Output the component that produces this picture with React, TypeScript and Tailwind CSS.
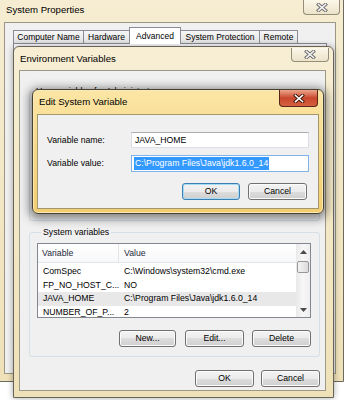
const rows = [
  ["ComSpec", "C:\\Windows\\system32\\cmd.exe"],
  ["FP_NO_HOST_C...", "NO"],
  ["JAVA_HOME", "C:\\Program Files\\Java\\jdk1.6.0_14"],
  ["NUMBER_OF_P...", "2"],
];

function CloseGlyph({ active = false }: { active?: boolean }) {
  return (
    <svg width="12" height="9" viewBox="0 0 12 9">
      <path
        d="M2.5 1.5 L9.5 7.5 M9.5 1.5 L2.5 7.5"
        stroke={active ? "#3f160c" : "#6a6a6a"}
        strokeWidth="3.4"
        strokeLinecap="square"
      />
      <path
        d="M2.5 1.5 L9.5 7.5 M9.5 1.5 L2.5 7.5"
        stroke={active ? "#ffffff" : "#f4f4f4"}
        strokeWidth="1.6"
        strokeLinecap="square"
      />
    </svg>
  );
}

function CloseButton({ active = false, className = "" }: { active?: boolean; className?: string }) {
  return (
    <div
      className={`absolute flex items-center justify-center rounded-b-[4px] border border-t-0 ${
        active
          ? "border-[#5a2416] bg-linear-to-b from-[#eca48d] via-[#c8472c] to-[#d5603f]"
          : "border-[#938d7a] bg-linear-to-b from-[#fbf7ea] to-[#ece3c8]"
      } ${className}`}
    >
      <CloseGlyph active={active} />
    </div>
  );
}

function WinButton({
  label,
  className = "",
  focused = false,
}: {
  label: string;
  className?: string;
  focused?: boolean;
}) {
  return (
    <div
      className={`h-[17px] flex items-center justify-center rounded-[3px] border text-[8.7px] leading-none text-black bg-[linear-gradient(#f3f3f3_0%,#ebebeb_50%,#dddddd_50%,#cfcfcf_100%)] ${
        focused
          ? "border-[#3c7fb1] shadow-[inset_0_0_0_1px_#a6dbf5]"
          : "border-[#707070] shadow-[inset_0_0_0_1px_#fbfbfb]"
      } ${className}`}
    >
      {label}
    </div>
  );
}

function Tab({ label, width, selected = false }: { label: string; width: string; selected?: boolean }) {
  return (
    <div
      className={`${width} ${
        selected ? "relative z-10 h-[17px] bg-white" : "h-[14px] bg-linear-to-b from-[#f6f6f6] to-[#e0e0e0]"
      } -ml-px first:ml-0 border border-b-0 border-[#898c95] flex items-center justify-center text-[8.5px] leading-none text-black`}
    >
      {label}
    </div>
  );
}

function Arrow({ up = false }: { up?: boolean }) {
  return (
    <svg width="7" height="4" viewBox="0 0 7 4">
      <path d={up ? "M3.5 0 L7 4 L0 4 Z" : "M0 0 L7 0 L3.5 4 Z"} fill="#4a4a4a" />
    </svg>
  );
}

export default function App() {
  return (
    <div className="relative w-[344px] h-[400px] overflow-hidden bg-white font-['Liberation_Sans',Arial,sans-serif] text-black">
      {/* System Properties */}
      <div className="absolute left-[-4px] top-[-6px] w-[348px] h-[388px] flex flex-col rounded-t-[7px] border border-[#6c6a5f] bg-linear-to-b from-[#f6edd2] to-[#efe1b8]">
        <div className="h-[27px] flex items-end pb-[6px] pl-[9px] text-[9.6px] leading-[12px]">System Properties</div>
        <CloseButton className="right-[3px] top-[5px] w-[37px] h-[15px]" />
        <div className="flex-1 mx-[7px] mb-[7px] flex flex-col bg-[#f0f0f0] border border-[#9a9585]">
          <div className="flex items-end pt-[4px] pl-[8px]">
            <Tab label="Computer Name" width="w-[71px]" />
            <Tab label="Hardware" width="w-[47px]" />
            <Tab label="Advanced" width="w-[52px]" selected />
            <Tab label="System Protection" width="w-[80px]" />
            <Tab label="Remote" width="w-[39px]" />
          </div>
          <div className="flex-1 mx-[8px] mb-[8px] -mt-px border border-[#898c95] bg-white" />
        </div>
      </div>

      {/* Environment Variables */}
      <div className="absolute left-[13px] top-[46px] w-[321px] h-[352px] flex flex-col rounded-t-[6px] border border-[#67645a] bg-linear-to-b from-[#f7eed4] to-[#efe1b7] shadow-[0_0_6px_rgba(0,0,0,0.35)]">
        <div className="h-[23px] flex items-center pl-[6px] text-[9.6px] leading-[12px]">Environment Variables</div>
        <CloseButton className="right-[4px] top-[1px] w-[38px] h-[14px]" />
        <div className="flex-1 ml-[5px] mr-[7px] mb-[6px] flex flex-col pl-[9px] pr-[5px] pt-[14px] bg-[#f0f0f0] border border-[#9c9888]">
          <fieldset className="h-[136px] border border-[#d5dfe5] rounded-[3px]">
            <legend className="ml-[4px] px-[2px] text-[8.7px] leading-[12px]">User variables for Administrator</legend>
          </fieldset>

          <fieldset className="mt-[5px] pl-[7px] pr-[8px] pb-[9px] border border-[#d5dfe5] rounded-[3px]">
            <legend className="ml-[4px] px-[2px] text-[8.7px] leading-[12px]">System variables</legend>
            <div className="mt-[5px] h-[75px] flex border border-[#828790] bg-white overflow-hidden">
              <div className="flex-1 flex flex-col text-[8.7px] leading-none">
                <div className="h-[19px] flex shrink-0 border-b border-[#e5e5e5] bg-linear-to-b from-white to-[#f7f8f9] text-[#1e2a3a]">
                  <div className="w-[81px] flex items-center pl-[4px] border-r border-[#e5e5e5]">Variable</div>
                  <div className="flex items-center pl-[5px]">Value</div>
                </div>
                <div className="pt-[2px] flex flex-col">
                  {rows.map(([name, value]) => (
                    <div
                      key={name}
                      className={`h-[13.5px] shrink-0 flex items-center ${name === "JAVA_HOME" ? "bg-[#e8e8e8]" : ""}`}
                    >
                      <div className="w-[81px] pl-[5px] whitespace-nowrap">{name}</div>
                      <div className="pl-[5px] whitespace-nowrap">{value}</div>
                    </div>
                  ))}
                </div>
              </div>
              <div className="w-[14px] flex flex-col bg-linear-to-r from-[#e9e9e9] via-[#f7f7f7] to-[#eeeeee]">
                <div className="h-[15px] flex items-center justify-center">
                  <Arrow up />
                </div>
                <div className="flex-1 px-[1px]">
                  <div className="mt-[2px] h-[12px] rounded-[2px] border border-[#979797] bg-linear-to-r from-[#f4f4f4] to-[#dcdcdc]" />
                </div>
                <div className="h-[15px] flex items-center justify-center">
                  <Arrow />
                </div>
              </div>
            </div>
            <div className="mt-[12px] flex justify-end">
              <WinButton label="New..." className="w-[57px]" />
              <WinButton label="Edit..." className="w-[59px] ml-[9px]" />
              <WinButton label="Delete" className="w-[59px] ml-[8px]" />
            </div>
          </fieldset>

          <div className="mt-[13px] flex justify-end gap-[7px]">
            <WinButton label="OK" className="w-[59px]" />
            <WinButton label="Cancel" className="w-[59px]" />
          </div>
        </div>
      </div>

      {/* Edit System Variable */}
      <div className="absolute left-[32px] top-[89px] w-[292px] h-[125px] flex flex-col rounded-[6px] border border-[#4a4230] bg-linear-to-b from-[#fbe6a6] via-[#f7d887] to-[#f3cd6e] shadow-[0_2px_10px_3px_rgba(0,0,0,0.45),inset_0_0_0_1px_#f8e9b8]">
        <div className="h-[24px] flex items-center pl-[6px] text-[9.6px] leading-[12px]">Edit System Variable</div>
        <CloseButton active className="right-[5px] top-0 w-[39px] h-[17px]" />
        <div className="flex-1 mx-[4px] mb-[4px] pt-[17px] pl-[9px] bg-[#f0f0f0] border border-[#a39770] text-[8.7px] leading-none">
          <div className="flex items-center">
            <div className="w-[84px]">Variable name:</div>
            <div className="w-[178px] h-[16px] flex items-center pl-[3px] bg-white border border-[#dbdfe6] border-t-[#abadb3]">
              JAVA_HOME
            </div>
          </div>
          <div className="mt-[7px] flex items-center">
            <div className="w-[84px]">Variable value:</div>
            <div className="w-[178px] h-[17px] flex items-center pl-[2px] bg-white border border-[#7eb4ea]">
              <span className="bg-[#3399ff] text-white py-[2px] px-[1px] whitespace-nowrap">C:\Program Files\Java\jdk1.6.0_14</span>
            </div>
          </div>
          <div className="mt-[11px] ml-[135px] flex gap-[8px]">
            <WinButton label="OK" className="w-[58px]" focused />
            <WinButton label="Cancel" className="w-[59px]" />
          </div>
        </div>
      </div>
    </div>
  );
}
